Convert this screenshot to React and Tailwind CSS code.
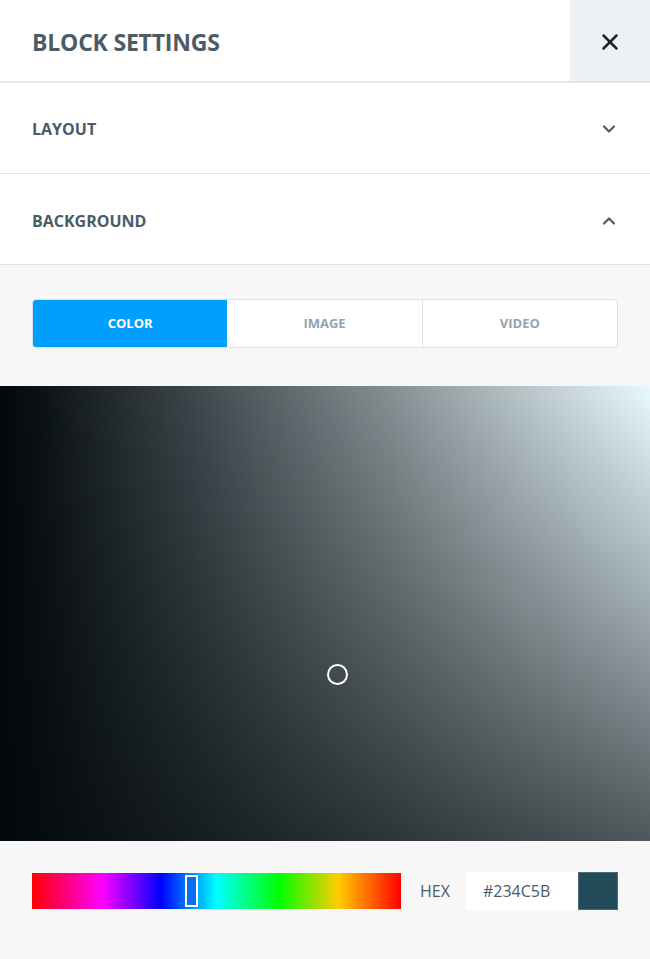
import React from "react";
import { X, ChevronDown, ChevronUp } from "lucide-react";

export default function App() {
  return (
    <div className="w-[650px] h-[959px] bg-[#f7f7f7] flex flex-col font-['Open_Sans',sans-serif] overflow-hidden">
      <div className="h-[83px] shrink-0 flex bg-white border-b-2 border-[#e3e7eb]">
        <div className="flex-1 flex items-center pl-8 pt-[4px]">
          <span className="text-[23px] font-bold text-[#4b5b67] tracking-[-0.2px]">BLOCK SETTINGS</span>
        </div>
        <div className="w-[80px] bg-[#eef1f4] flex items-center justify-center pt-[3px]">
          <X size={26} strokeWidth={2.3} className="text-[#222]" />
        </div>
      </div>
      <div className="h-[91px] shrink-0 flex items-center justify-between bg-white border-b border-[#dfe3e7] pl-8 pr-[31px] pt-[2px]">
        <span className="text-[16px] font-bold text-[#4b5b67]">LAYOUT</span>
        <ChevronDown size={20} strokeWidth={2.6} className="text-[#4b5b67]" />
      </div>
      <div className="h-[91px] shrink-0 flex items-center justify-between bg-white border-b border-[#dfe3e7] pl-8 pr-[31px] pt-[3px]">
        <span className="text-[16px] font-bold text-[#4b5b67]">BACKGROUND</span>
        <ChevronUp size={20} strokeWidth={2.6} className="text-[#4b5b67]" />
      </div>
      <div className="h-[121px] shrink-0 flex items-start pt-[34px] px-8">
        <div className="flex w-full h-[49px] rounded-[4px] border border-[#dde2e6] bg-white overflow-hidden">
          <div className="flex-1 bg-[#009ffd] flex items-center justify-center text-white text-[13px] font-bold">COLOR</div>
          <div className="flex-1 border-r border-[#dde2e6] flex items-center justify-center text-[#95a3ae] text-[13px] font-bold">IMAGE</div>
          <div className="flex-1 flex items-center justify-center text-[#95a3ae] text-[13px] font-bold">VIDEO</div>
        </div>
      </div>
      <div className="relative h-[455px] shrink-0 bg-[linear-gradient(to_right,#02080b_0%,#0b1216_6%,#3e474c_30%,#859094_60%,#e9f9fe_100%)]">
        <div className="absolute inset-0 bg-[linear-gradient(to_bottom,rgba(2,8,11,0)_0%,rgba(2,8,11,0.67)_100%)]" />
        <div className="absolute left-[327px] top-[278px] w-[21px] h-[21px] rounded-full border-2 border-white" />
      </div>
      <div className="flex-1 flex items-center px-8 pb-[18px]">
        <div className="relative w-[369px] h-[36px] bg-[linear-gradient(to_right,#ff0000_0%,#ff00ff_19%,#0000ff_35%,#00ffff_50%,#00ff00_67%,#ffcc00_83%,#ff0000_100%)]">
          <div className="absolute left-[153px] top-[2px] w-[13px] h-[32px] border-2 border-white bg-[#0a6cf0]" />
        </div>
        <span className="ml-[19px] text-[16px] text-[#4b5b67]">HEX</span>
        <div className="ml-[16px] w-[112px] h-[38px] bg-white flex items-center pl-[17px] text-[16px] text-[#4b5b67]">#234C5B</div>
        <div className="w-[40px] h-[38px] bg-[#234c5b] border border-[#4c6c78]" />
      </div>
    </div>
  );
}
